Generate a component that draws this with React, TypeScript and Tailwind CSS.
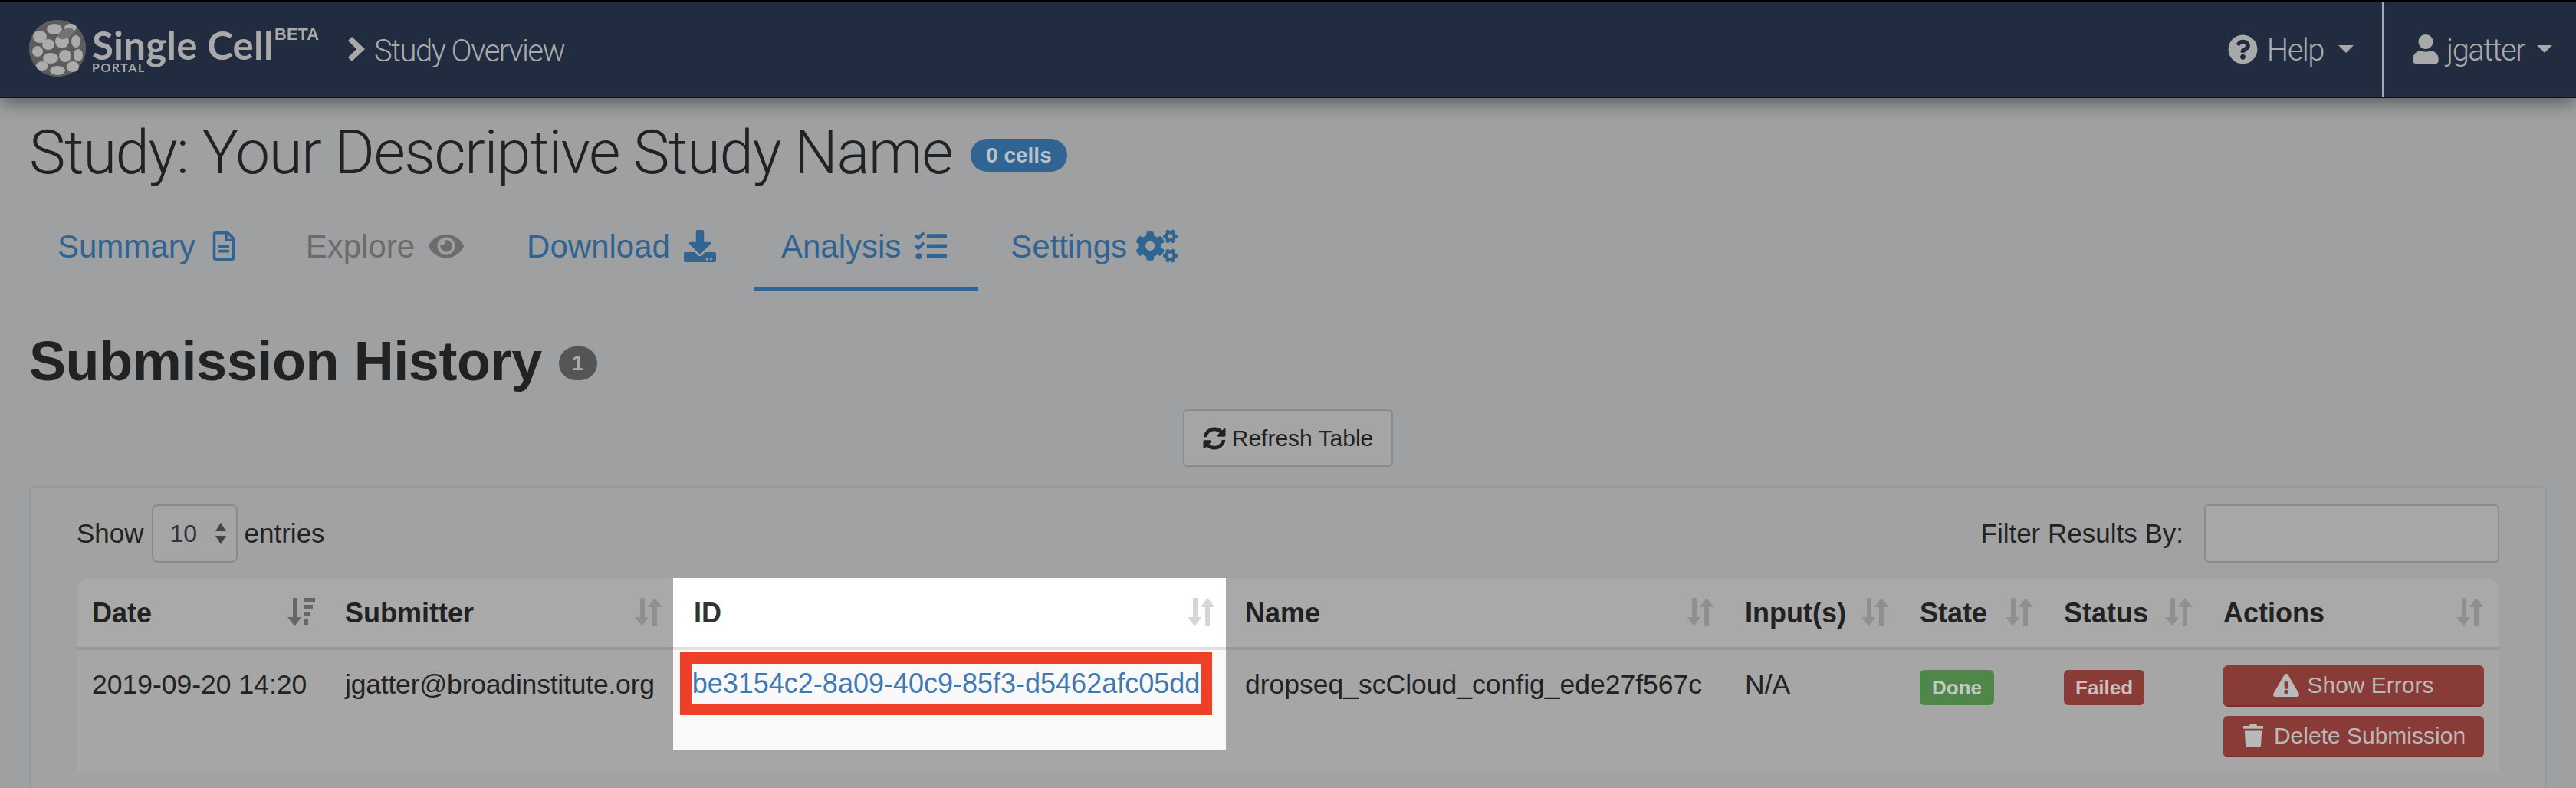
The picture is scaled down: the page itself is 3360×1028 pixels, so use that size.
import {
  FaCogs,
  FaDownload,
  FaExclamationTriangle,
  FaEye,
  FaQuestionCircle,
  FaRegFileAlt,
  FaSyncAlt,
  FaTasks,
  FaTrash,
  FaUser,
} from "react-icons/fa";

const sans = "font-['Liberation_Sans',Arial,sans-serif]";

function Caret() {
  return (
    <svg width="20" height="10" viewBox="0 0 20 10" className="fill-[#a9a9a9]">
      <path d="M0 0h20L10 10z" />
    </svg>
  );
}

function SortIcon({ light }: { light?: boolean }) {
  return (
    <svg width="36" height="37" viewBox="0 0 36 37" className={`shrink-0 ${light ? "fill-[#d6d6d6]" : "fill-[#8f8f8f]"}`}>
      <path d="M7 0h6v25h5L9.500 37 0 25h7z" />
      <path d="M23 37h6V12h6.500L26 0 17 12h6z" />
    </svg>
  );
}

function SortDateIcon() {
  return (
    <svg width="36" height="37" viewBox="0 0 36 37" className="shrink-0 fill-[#666]">
      <path d="M7 0h6v25h5L9.500 37 0 25h7z" />
      <path d="M21 0h15v6H21zM21 9h12v6H21zM21 18h9v6H21zM21 27h6v8h-6z" />
    </svg>
  );
}

function Logo() {
  const cells = [
    [14, 22, 9, 8], [33, 12, 10, 7], [54, 10, 8, 5], [25, 32, 8, 7], [43, 28, 9, 9],
    [61, 28, 6, 8], [11, 41, 7, 7], [28, 50, 10, 7], [47, 47, 8, 8], [64, 46, 6, 8],
    [17, 60, 8, 6], [37, 66, 10, 6], [57, 61, 8, 7],
  ];
  return (
    <svg width="74" height="74" viewBox="0 0 74 74" className="shrink-0 blur-[0.6px]">
      <circle cx="37" cy="37" r="37" fill="#a9a9a9" />
      <circle cx="37" cy="37" r="37" fill="#1d1d1d" fillOpacity="0.55" />
      {cells.map(([cx, cy, rx, ry], i) => (
        <ellipse key={i} cx={cx} cy={cy} rx={rx} ry={ry} fill="#ababab" />
      ))}
      <ellipse cx="48" cy="18" rx="11" ry="6" fill="#737373" transform="rotate(-25 48 18)" />
    </svg>
  );
}

function Tab({ label, icon, muted, active, className }: { label: string; icon: React.ReactNode; muted?: boolean; active?: boolean; className: string }) {
  return (
    <div
      className={`flex h-[92px] items-center border-b-[6px] pb-[20px] text-[42px] ${className} ${
        active ? "border-[#2f6493]" : "border-transparent"
      } ${muted ? "text-[#6c6c6c]" : "text-[#2f6493]"}`}
    >
      <span>{label}</span>
      {icon}
    </div>
  );
}

function HeadCell({ name, className }: { name: string; className: string }) {
  return (
    <div className={`flex h-[94px] items-start justify-between border-b-4 border-[#999] pt-[26px] ${className}`}>
      <span className="text-[36px] font-bold leading-[40px] text-[#222]">{name}</span>
      <SortIcon />
    </div>
  );
}

export default function App() {
  return (
    <div className={`h-[1028px] w-[3360px] overflow-hidden bg-[#9fa0a2] ${sans}`}>
      {/* top bar */}
      <header className="relative flex h-[128px] items-stretch border-y-2 border-t-black border-b-[#111] bg-[#212c40] pl-[38px] text-[#a9a9a9] shadow-[0_6px_22px_rgba(0,0,0,0.45)]">
        <div className="flex items-center pb-[2px]">
          <Logo />
          <div className="relative ml-2 w-[296px] self-stretch blur-[0.4px]">
            <div className="pt-[27px] font-['Lato',sans-serif] text-[51px] font-bold leading-[60px] tracking-[0.2px]">Single Cell</div>
            <div className="-mt-[9px] font-['Lato',sans-serif] text-[16px] font-bold leading-[16px] tracking-[1.5px]">PORTAL</div>
            <div className="absolute left-[238px] top-[32px] text-[22px] font-bold leading-[22px]">BETA</div>
          </div>
        </div>
        <div className="ml-[38px] flex items-center gap-[12px]">
          <svg width="22" height="32" viewBox="0 0 22 32" className="fill-[#a9a9a9]">
            <path d="M0 5l5-5 17 16L5 32l-5-5 11-11z" />
          </svg>
          <span className="mt-[5px] font-['Roboto',sans-serif] text-[40px] font-light tracking-[-1.5px]">Study Overview</span>
        </div>
        <div className="ml-auto flex items-center gap-3 pr-[37px]">
          <FaQuestionCircle className="size-[39px]" />
          <span className="mt-[3px] font-['Roboto',sans-serif] text-[40px] font-light tracking-[-1.5px]">Help</span>
          <span className="ml-[7px]"><Caret /></span>
        </div>
        <div className="flex w-[253px] items-center border-l-2 border-[#a9a9a9] pl-[36px]">
          <FaUser className="size-[38px]" />
          <span className="ml-[8px] mt-[3px] font-['Roboto',sans-serif] text-[40px] font-light tracking-[-1.5px]">jgatter</span>
          <span className="ml-[16px]"><Caret /></span>
        </div>
      </header>

      <main className="px-[38px] pt-[21px]">
        <div className="flex items-center">
          <h1 className="font-['Roboto',sans-serif] text-[80px] font-light leading-[100px] tracking-[-1.5px] text-[#222]">
            Study: Your Descriptive Study Name
          </h1>
          <span className="ml-[24px] mt-[6px] rounded-full bg-[#2f6493] px-[20px] text-[28px] font-bold leading-[43px] text-[#b9c0c8]">0 cells</span>
        </div>

        <nav className="mt-[39px] flex">
          <Tab label="Summary" className="gap-[18px] pl-[37px] pr-[88px]" icon={<FaRegFileAlt className="size-[38px]" />} />
          <Tab label="Explore" muted className="gap-[18px] pr-[82px]" icon={<FaEye className="size-[46px]" />} />
          <Tab label="Download" className="gap-[18px] pr-[49px]" icon={<FaDownload className="size-[42px]" />} />
          <Tab label="Analysis" active className="gap-[18px] pl-[36px] pr-[41px]" icon={<FaTasks className="size-[42px]" />} />
          <Tab label="Settings" className="gap-[12px] pl-[42px]" icon={<FaCogs className="size-[54px]" />} />
        </nav>

        <div className="mt-[49px] flex items-center">
          <h2 className="text-[72px] font-bold leading-[84px] tracking-[-0.4px] text-[#222]">Submission History</h2>
          <span className="ml-[22px] mt-[6px] rounded-full bg-[#555] px-[17px] text-[28px] font-bold leading-[44px] text-[#aaa]">1</span>
        </div>

        <div className="mt-[21px] flex justify-center">
          <button className="flex h-[75px] w-[274px] items-center justify-center gap-[8px] rounded-[6px] border-2 border-[#8a8a8a] bg-[#a5a5a5] text-[30px] text-[#222]">
            <FaSyncAlt className="size-[30px]" />
            Refresh Table
          </button>
        </div>

        {/* panel */}
        <section className="mt-[25px] h-[394px] rounded-t-[6px] border-2 border-b-0 border-[#999] bg-[#a2a2a2] px-[60px] pt-[22px]">
          <div className="flex h-[76px] items-center text-[35px] text-[#222]">
            <span>Show</span>
            <div className="ml-[10px] flex h-[76px] w-[112px] items-center justify-between rounded-[8px] border-2 border-[#8a8a8a] bg-[#a5a5a5] pl-[22px] pr-[12px]">
              <span className="text-[32px] text-[#333]">10</span>
              <svg width="16" height="28" viewBox="0 0 16 28" className="fill-[#444]">
                <path d="M8 0l7 11H1zM8 28L1 17h14z" />
              </svg>
            </div>
            <span className="ml-[9px]">entries</span>
            <span className="ml-auto">Filter Results By:</span>
            <div className="ml-[27px] h-[76px] w-[385px] rounded-[6px] border-2 border-[#8a8a8a] bg-[#a7a7a7]" />
          </div>

          {/* table */}
          <div className="mt-[20px] flex h-[254px] rounded-t-[16px] bg-[linear-gradient(#a9a9a9_0,#a9a9a9_94px,#a6a6a6_94px)] text-[35.5px] leading-[40px] text-[#222]">
            <div className="w-[330px]">
              <div className="flex h-[94px] items-start justify-between border-b-4 border-[#999] pl-5 pr-[19px] pt-[26px]">
                <span className="text-[36px] font-bold">Date</span>
                <SortDateIcon />
              </div>
              <div className="whitespace-nowrap pl-5 pt-[25px]">2019-09-20 14:20</div>
            </div>
            <div className="w-[448px]">
              <HeadCell name="Submitter" className="pl-5 pr-[14px]" />
              <div className="whitespace-nowrap pl-5 pt-[25px] tracking-[-0.2px]">jgatter@broadinstitute.org</div>
            </div>

            {/* highlighted ID column */}
            <div className="w-[721px] self-start">
              <div className="flex h-[94px] items-start justify-between border-b-4 border-[#e0e0e0] bg-white pl-[27px] pr-[14px] pt-[26px]">
                <span className="text-[36px] font-bold text-[#333]">ID</span>
                <SortIcon light />
              </div>
              <div className="h-[130px] bg-[#f9f9f9] pl-[9px] pt-[3px]">
                <div className="flex h-[82px] w-[694px] items-center justify-center whitespace-nowrap border-[15px] border-[#ee4027] text-[36px] text-[#3f79b3]">
                  be3154c2-8a09-40c9-85f3-d5462afc05dd
                </div>
              </div>
            </div>

            <div className="w-[657px]">
              <HeadCell name="Name" className="pl-[25px] pr-5" />
              <div className="whitespace-nowrap pl-[25px] pt-[25px]">dropseq_scCloud_config_ede27f567c</div>
            </div>
            <div className="w-[228px]">
              <HeadCell name="Input(s)" className="pl-5 pr-5" />
              <div className="pl-5 pt-[25px]">N/A</div>
            </div>
            <div className="w-[188px]">
              <HeadCell name="State" className="pl-5 pr-5" />
              <div className="pl-5 pt-[26px]">
                <span className="inline-block rounded-[6px] bg-[#4f8649] px-4 text-[26px] font-bold leading-[46px] text-[#c3c9c2]">Done</span>
              </div>
            </div>
            <div className="w-[208px]">
              <HeadCell name="Status" className="pl-5 pr-5" />
              <div className="pl-5 pt-[26px]">
                <span className="inline-block rounded-[6px] bg-[#893c37] px-[15px] text-[26px] font-bold leading-[46px] text-[#c9bfbe]">Failed</span>
              </div>
            </div>
            <div className="flex-1">
              <HeadCell name="Actions" className="pl-5 pr-5" />
              <div className="flex flex-col gap-3 pl-5 pr-5 pt-5 text-[30px] text-[#b9b9b9]">
                <div className="flex h-[54px] items-center justify-center gap-[10px] rounded-[6px] border-b-2 border-[#7c2f2a] bg-[#893c37]">
                  <FaExclamationTriangle className="size-[34px]" />
                  Show Errors
                </div>
                <div className="flex h-[54px] items-center justify-center gap-[12px] rounded-[6px] border-b-2 border-[#7c2f2a] bg-[#893c37]">
                  <FaTrash className="size-[30px]" />
                  Delete Submission
                </div>
              </div>
            </div>
          </div>
        </section>
      </main>
    </div>
  );
}
